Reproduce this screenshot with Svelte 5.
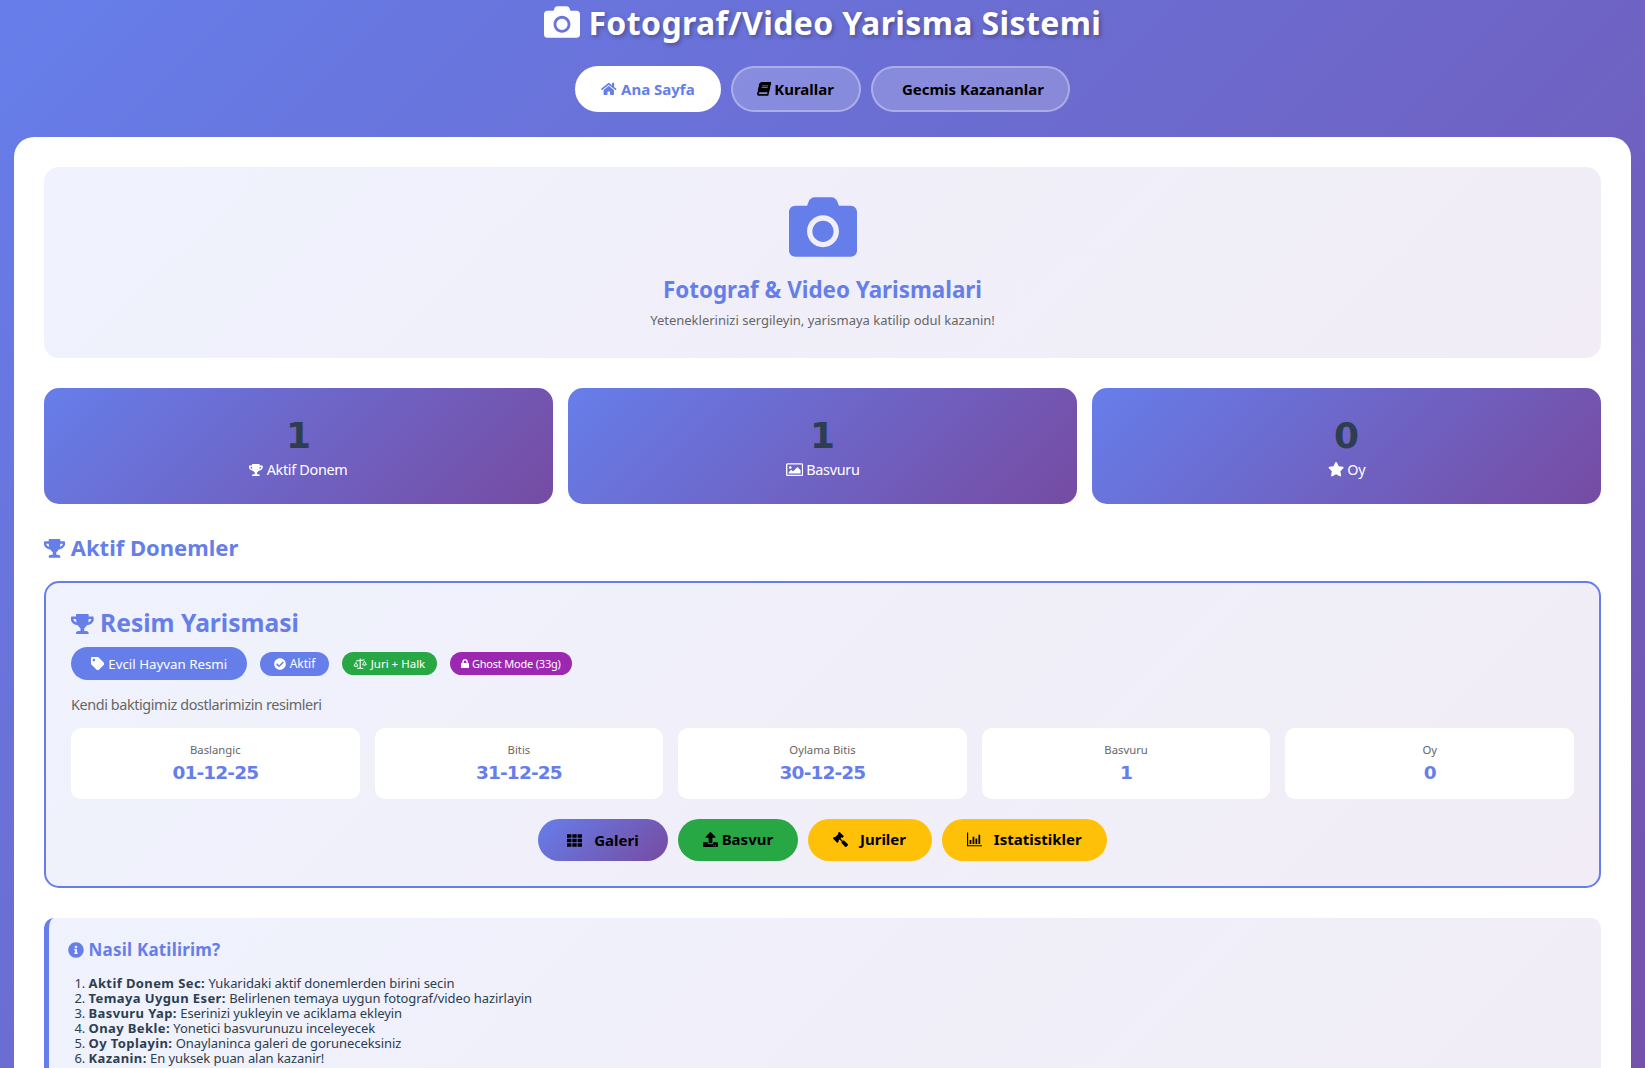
<script>
  const I = {
    camera: [512, 'M512 144v288c0 26.5-21.5 48-48 48H48c-26.5 0-48-21.5-48-48V144c0-26.5 21.5-48 48-48h88l12.3-32.9c7-18.7 24.9-31.1 44.9-31.1h125.5c20 0 37.9 12.4 44.9 31.1L376 96h88c26.5 0 48 21.5 48 48zM376 288c0-66.2-53.8-120-120-120s-120 53.8-120 120 53.8 120 120 120 120-53.8 120-120zm-40 0c0 44-36 80-80 80s-80-36-80-80 36-80 80-80 80 36 80 80z'],
    home: [576, 'M280.37 148.26L96 300.11V464a16 16 0 0 0 16 16l112.06-.29a16 16 0 0 0 15.92-16V368a16 16 0 0 1 16-16h64a16 16 0 0 1 16 16v95.64a16 16 0 0 0 16 16.05L464 480a16 16 0 0 0 16-16V300L295.67 148.26a12.19 12.19 0 0 0-15.3 0zM571.6 251.47L488 182.56V44.05a12 12 0 0 0-12-12h-56a12 12 0 0 0-12 12v72.61L318.47 43a48 48 0 0 0-61 0L4.34 251.47a12 12 0 0 0-1.6 16.9l25.5 31A12 12 0 0 0 45.15 301l235.22-193.74a12.19 12.19 0 0 1 15.3 0L530.9 301a12 12 0 0 0 16.9-1.6l25.5-31a12 12 0 0 0-1.7-16.93z'],
    book: [448, 'M448 360V24c0-13.3-10.7-24-24-24H96C43 0 0 43 0 96v320c0 53 43 96 96 96h328c13.3 0 24-10.7 24-24v-16c0-7.5-3.5-14.3-8.9-18.7-4.2-15.4-4.2-59.3 0-74.7 5.4-4.3 8.9-11.1 8.9-18.6zM128 134c0-3.3 2.7-6 6-6h212c3.3 0 6 2.7 6 6v20c0 3.3-2.7 6-6 6H134c-3.3 0-6-2.7-6-6v-20zm0 64c0-3.3 2.7-6 6-6h212c3.3 0 6 2.7 6 6v20c0 3.3-2.7 6-6 6H134c-3.3 0-6-2.7-6-6v-20zm253.4 250H96c-17.7 0-32-14.3-32-32 0-17.6 14.4-32 32-32h285.4c-1.9 17.1-1.9 46.9 0 64z'],
    trophy: [576, 'M552 64H448V24c0-13.3-10.7-24-24-24H152c-13.3 0-24 10.7-24 24v40H24C10.7 64 0 74.7 0 88v56c0 35.7 22.5 72.4 61.9 100.7 31.5 22.7 69.8 37.1 110 41.7C203.3 338.5 240 360 240 360v72h-48c-35.3 0-64 20.7-64 56v12c0 6.6 5.4 12 12 12h296c6.6 0 12-5.4 12-12v-12c0-35.3-28.7-56-64-56h-48v-72s36.7-21.5 68.1-73.6c40.3-4.6 78.6-19 110-41.7 39.3-28.3 61.9-65 61.9-100.7V88c0-13.3-10.7-24-24-24zM99.3 192.8C74.9 175.2 64 155.6 64 144v-16h64.2c1 32.6 5.8 61.2 12.8 86.2-15.1-5.2-29.2-12.4-41.7-21.4zM512 144c0 16.1-17.7 36.1-35.3 48.8-12.5 9-26.7 16.2-41.8 21.4 7-25 11.8-53.6 12.8-86.2H512v16z'],
    star: [576, 'M259.3 17.8L194 150.2 47.9 171.5c-26.2 3.8-36.7 36.1-17.7 54.6l105.7 103-25 145.5c-4.5 26.3 23.2 46 46.4 33.7L288 439.6l130.7 68.7c23.2 12.2 50.9-7.4 46.4-33.7l-25-145.5 105.7-103c19-18.5 8.5-50.8-17.7-54.6L382 150.2 316.7 17.8c-11.7-23.6-45.6-23.9-57.4 0z'],
    image: [512, 'M464 64H48C21.5 64 0 85.5 0 112v288c0 26.5 21.5 48 48 48h416c26.5 0 48-21.5 48-48V112c0-26.5-21.5-48-48-48zm8 336c0 4.4-3.6 8-8 8H48c-4.4 0-8-3.6-8-8V112c0-4.4 3.6-8 8-8h416c4.4 0 8 3.6 8 8v288zM128 152c-22 0-40 18-40 40s18 40 40 40 40-18 40-40-18-40-40-40zM80 368h352V272l-84-84c-4.7-4.7-12.3-4.7-17 0L208 311l-44-44c-4.7-4.7-12.3-4.7-17 0l-67 67v34z'],
    tag: [512, 'M0 252.118V48C0 21.49 21.49 0 48 0h204.118a48 48 0 0 1 33.941 14.059l211.882 211.882c18.745 18.745 18.745 49.137 0 67.882L293.823 497.941c-18.745 18.745-49.137 18.745-67.882 0L14.059 286.059A48 48 0 0 1 0 252.118zM112 64c-26.51 0-48 21.49-48 48s21.49 48 48 48 48-21.49 48-48-21.49-48-48-48z'],
    check: [512, 'M504 256c0 136.967-111.033 248-248 248S8 392.967 8 256 119.033 8 256 8s248 111.033 248 248zM227.314 387.314l184-184c6.248-6.248 6.248-16.379 0-22.627l-22.627-22.627c-6.248-6.249-16.379-6.249-22.628 0L216 308.118l-70.059-70.059c-6.248-6.248-16.379-6.248-22.628 0l-22.627 22.627c-6.248 6.248-6.248 16.379 0 22.627l104 104c6.249 6.249 16.379 6.249 22.628.001z'],
    lock: [448, 'M400 224h-24v-72C376 68.2 307.8 0 224 0S72 68.2 72 152v72H48c-26.5 0-48 21.5-48 48v192c0 26.5 21.5 48 48 48h352c26.5 0 48-21.5 48-48V272c0-26.5-21.5-48-48-48zm-104 0H152v-72c0-39.7 32.3-72 72-72s72 32.3 72 72v72z'],
    info: [512, 'M256 8C119.043 8 8 119.083 8 256c0 136.997 111.043 248 248 248s248-111.003 248-248C504 119.083 392.957 8 256 8zm0 110c23.196 0 42 18.804 42 42s-18.804 42-42 42-42-18.804-42-42 18.804-42 42-42zm56 254c0 6.627-5.373 12-12 12h-88c-6.627 0-12-5.373-12-12v-24c0-6.627 5.373-12 12-12h12v-64h-12c-6.627 0-12-5.373-12-12v-24c0-6.627 5.373-12 12-12h64c6.627 0 12 5.373 12 12v100h12c6.627 0 12 5.373 12 12v24z'],
    upload: [512, 'M296 384h-80c-13.3 0-24-10.7-24-24V192h-87.7c-17.8 0-26.7-21.5-14.1-34.1L242.3 5.7c7.5-7.5 19.8-7.5 27.3 0l152.2 152.2c12.6 12.6 3.7 34.1-14.1 34.1H320v168c0 13.3-10.7 24-24 24zm216-8v112c0 13.3-10.7 24-24 24H24c-13.3 0-24-10.7-24-24V376c0-13.3 10.7-24 24-24h136v8c0 30.9 25.1 56 56 56h80c30.9 0 56-25.1 56-56v-8h136c13.3 0 24 10.7 24 24zm-124 88c0-11-9-20-20-20s-20 9-20 20 9 20 20 20 20-9 20-20zm64 0c0-11-9-20-20-20s-20 9-20 20 9 20 20 20 20-9 20-20z'],
    gavel: [512, 'M504.971 199.362l-22.627-22.627c-9.373-9.373-24.569-9.373-33.941 0l-5.657 5.657L329.608 69.255l5.657-5.657c9.373-9.373 9.373-24.569 0-33.941L312.638 7.029c-9.373-9.373-24.569-9.373-33.941 0L154.246 131.48c-9.373 9.373-9.373 24.569 0 33.941l22.627 22.627c9.373 9.373 24.569 9.373 33.941 0l5.657-5.657 39.598 39.598-81.04 81.04-5.657-5.657c-12.497-12.497-32.758-12.497-45.255 0L9.373 412.118c-12.497 12.497-12.497 32.758 0 45.255l45.255 45.255c12.497 12.497 32.758 12.497 45.255 0l114.745-114.745c12.497-12.497 12.497-32.758 0-45.255l-5.657-5.657 81.04-81.04 39.598 39.598-5.657 5.657c-9.373 9.373-9.373 24.569 0 33.941l22.627 22.627c9.373 9.373 24.569 9.373 33.941 0l124.451-124.451c9.372-9.372 9.372-24.568 0-33.941z'],
    th: [512, 'M0 40h150v120H0zM181 40h150v120H181zM362 40h150v120H362zM0 196h150v120H0zM181 196h150v120H181zM362 196h150v120H362zM0 352h150v120H0zM181 352h150v120H181zM362 352h150v120H362z'],
    chart: [512, 'M0 20h40v430h472v40H0zM90 272h60v140H90zM190 160h60v252h-60zM290 224h60v188h-60zM390 90h60v322h-60z'],
    scale: [640, 'M295 20h50v66l150-26 10 40-160 28v310h115v44H180v-44h115V128L145 156l-10-40 160-30zM130 170l105 180c-14 34-60 52-105 52s-91-18-105-52zm0 64-64 112h128zM510 110l105 180c-14 34-60 52-105 52s-91-18-105-52zm0 64-64 112h128z']
  };
  const stats = [['1', 'trophy', 'Aktif Donem'], ['1', 'image', 'Basvuru'], ['0', 'star', 'Oy']];
  const info = [['Baslangic', '01-12-25'], ['Bitis', '31-12-25'], ['Oylama Bitis', '30-12-25'], ['Basvuru', '1'], ['Oy', '0']];
  const steps = [
    ['Aktif Donem Sec:', 'Yukaridaki aktif donemlerden birini secin'],
    ['Temaya Uygun Eser:', 'Belirlenen temaya uygun fotograf/video hazirlayin'],
    ['Basvuru Yap:', 'Eserinizi yukleyin ve aciklama ekleyin'],
    ['Onay Bekle:', 'Yonetici basvurunuzu inceleyecek'],
    ['Oy Toplayin:', 'Onaylaninca galeri de goruneceksiniz'],
    ['Kazanin:', 'En yuksek puan alan kazanir!']
  ];
</script>

{#snippet icon(n, cls = '')}
  <svg class="ic {n} {cls}" viewBox="0 0 {I[n][0]} 512" aria-hidden="true"><path d={I[n][1]} /></svg>
{/snippet}

<div class="page">
  <header>
    <h1>{@render icon('camera')} Fotograf/Video Yarisma Sistemi</h1>
    <nav>
      <a class="nb active" href="#a">{@render icon('home')} Ana Sayfa</a>
      <a class="nb" href="#k">{@render icon('book', 'skew')} Kurallar</a>
      <a class="nb wide" href="#g">Gecmis Kazananlar</a>
    </nav>
  </header>

  <main>
    <section class="hero">
      {@render icon('camera', 'big')}
      <h2>Fotograf &amp; Video Yarismalari</h2>
      <p>Yeteneklerinizi sergileyin, yarismaya katilip odul kazanin!</p>
    </section>

    <section class="stats">
      {#each stats as s}
        <div class="stat">
          <div class="num">{s[0]}</div>
          <div class="lab">{@render icon(s[1])} {s[2]}</div>
        </div>
      {/each}
    </section>

    <h3 class="sec">{@render icon('trophy')} Aktif Donemler</h3>

    <article class="card">
      <h3 class="ct">{@render icon('trophy')} Resim Yarismasi</h3>
      <div class="tags">
        <span class="theme">{@render icon('tag')} Evcil Hayvan Resmi</span>
        <span class="badge act">{@render icon('check')} Aktif</span>
        <span class="badge grn">{@render icon('scale')} Juri + Halk</span>
        <span class="badge pur">{@render icon('lock')} Ghost Mode (33g)</span>
      </div>
      <p class="desc">Kendi baktigimiz dostlarimizin resimleri</p>
      <div class="infos">
        {#each info as d}
          <div class="inf"><span>{d[0]}</span><strong>{d[1]}</strong></div>
        {/each}
      </div>
      <div class="acts">
        <a class="btn grad" href="#1">{@render icon('th')}&nbsp; Galeri</a>
        <a class="btn green" href="#2">{@render icon('upload')} Basvur</a>
        <a class="btn yel" href="#3">{@render icon('gavel', 'flip')}&nbsp; Juriler</a>
        <a class="btn yel" href="#4">{@render icon('chart')}&nbsp; Istatistikler</a>
      </div>
    </article>

    <section class="how">
      <h4>{@render icon('info')} Nasil Katilirim?</h4>
      <ol>
        {#each steps as s}
          <li><strong>{s[0]}</strong> {s[1]}</li>
        {/each}
      </ol>
    </section>
  </main>
</div>

<style>
  :global(html), :global(body) { margin: 0; height: 1068px; overflow: hidden; }
  :global(body) {
    background: linear-gradient(135deg, #667eea 0%, #764ba2 100%);
    background-size: 100% 1500px;
    font-family: "Noto Sans", sans-serif;
    color: #2c3e50;
  }
  .ic { height: 1em; width: auto; fill: currentColor; vertical-align: -0.125em; }
  .ic.skew { transform: skewX(-12deg); }
  .ic.flip { transform: scaleX(-1); }
  .ic.trophy { height: .85em; vertical-align: -.08em; }
  .ct .ic.trophy { height: .82em; }
  .ic.image { height: 1.2em; vertical-align: -.22em; }
  .ic.scale { height: 1em; vertical-align: -.14em; }
  .ic.info { height: .94em; vertical-align: -.1em; }
  .page { padding: 0 14px; }
  header { text-align: center; color: #fff; }
  h1 { margin: 0; padding-top: 3px; font-size: 32px; line-height: 40px; font-weight: 700; letter-spacing: .38px; text-shadow: 2px 2px 4px rgba(0, 0, 0, .3); }
  h1 .ic { height: 36px; vertical-align: -5px; }
  nav { display: flex; justify-content: center; gap: 10px; margin-top: 23px; }
  .nb {
    box-sizing: border-box; height: 46px; padding: 0 25px; display: flex; align-items: center; gap: 4px;
    border: 2px solid rgba(255, 255, 255, .3); border-radius: 25px; background: rgba(255, 255, 255, .2);
    color: #000; font-size: 15px; font-weight: 700; text-decoration: none;
  }
  .nb .ic { height: .92em; }
  .nb.active { background: #fff; border-color: #fff; color: #667eea; padding: 0 24.5px; }
  .nb.wide { padding: 0 24px 0 29px; }
  main { margin-top: 25px; background: #fff; border-radius: 20px 20px 0 0; padding: 30px; height: 1000px; box-sizing: border-box; }
  .hero { height: 191px; box-sizing: border-box; border-radius: 15px; padding-top: 26px; text-align: center; background: linear-gradient(135deg, rgba(102, 126, 234, .1), rgba(118, 75, 162, .1)); }
  .ic.big { height: 68px; color: #667eea; display: block; margin: 0 auto; }
  .hero h2 { margin: 14px 0 0; color: #667eea; font-size: 22.4px; line-height: 30px; }
  .hero p { margin: 7px 0 0; color: #666; font-size: 13px; line-height: 16px; }
  .stats { display: grid; grid-template-columns: repeat(3, 1fr); gap: 15px; margin-top: 30px; }
  .stat { height: 116px; box-sizing: border-box; padding-top: 30px; text-align: center; border-radius: 15px; background: linear-gradient(135deg, #667eea, #764ba2); color: #fff; }
  .num { font-family: "DejaVu Sans", sans-serif; font-size: 36px; line-height: 36px; font-weight: 700; color: #2c3e50; }
  .lab { margin-top: 6px; font-size: 14.4px; line-height: 20px; letter-spacing: -.3px; }
  .sec { margin: 28px 0 0; color: #667eea; font-size: 22px; line-height: 30px; }
  .card { margin-top: 19px; height: 307px; box-sizing: border-box; padding: 25px; border: 2px solid #667eea; border-radius: 15px; background: linear-gradient(135deg, rgba(102, 126, 234, .1), rgba(118, 75, 162, .1)); }
  .ct { margin: 0; color: #667eea; font-size: 24.6px; line-height: 30px; }
  .tags { display: flex; align-items: center; gap: 13px; margin-top: 9px; color: #fff; }
  .tags span { white-space: nowrap; }
  .theme { background: #667eea; border-radius: 20px; height: 33px; padding: 0 20px; display: flex; align-items: center; gap: 4px; font-size: 13.3px; }
  .badge { border-radius: 15px; display: flex; align-items: center; gap: 3px; padding: 0 11.5px; font-size: 11.5px; height: 23px; }
  .act { background: #667eea; font-size: 12px; height: 24px; padding: 0 13.5px; gap: 4px; }
  .grn { background: #28a745; }
  .pur { background: #9c27b0; font-size: 11px; letter-spacing: -.2px; padding: 0 11px; }
  .pur .ic { height: .85em; }
  .desc { margin: 15px 0 0; color: #666; font-size: 14.4px; line-height: 20px; letter-spacing: -.4px; }
  .infos { display: grid; grid-template-columns: repeat(5, 1fr); gap: 15px; margin-top: 13px; }
  .inf { height: 71px; box-sizing: border-box; background: #fff; border-radius: 10px; display: flex; flex-direction: column; align-items: center; justify-content: center; gap: 4px; }
  .inf span { color: #666; font-size: 11.3px; line-height: 15px; }
  .inf strong { font-family: "DejaVu Sans", sans-serif; color: #667eea; font-size: 18.5px; line-height: 24px; letter-spacing: -.85px; }
  .acts { display: flex; justify-content: center; gap: 10px; margin-top: 20px; }
  .btn { height: 42px; box-sizing: border-box; padding: 0 24.5px 2px; border-radius: 25px; display: flex; align-items: center; font-size: 15px; font-weight: 700; color: #000; text-decoration: none; gap: 4px; }
  .grad { background: linear-gradient(135deg, #667eea, #764ba2); padding: 0 29.5px; }
  .green { background: #28a745; }
  .yel { background: #ffc107; padding: 0 25.5px 2px; }
  .how { margin-top: 30px; height: 300px; box-sizing: border-box; border-left: 5px solid #667eea; border-radius: 10px; padding: 21px 20px 20px 19px; background: linear-gradient(135deg, rgba(102, 126, 234, .1), rgba(118, 75, 162, .1)); }
  .how h4 { margin: 0; color: #667eea; font-size: 17px; line-height: 22px; letter-spacing: .2px; }
  .how ol { margin: 15px 0 0; padding-left: 20.5px; font-size: 13px; line-height: 15.1px; letter-spacing: -.07px; color: #2c3e50; }
  .how strong { letter-spacing: .4px; }
</style>
